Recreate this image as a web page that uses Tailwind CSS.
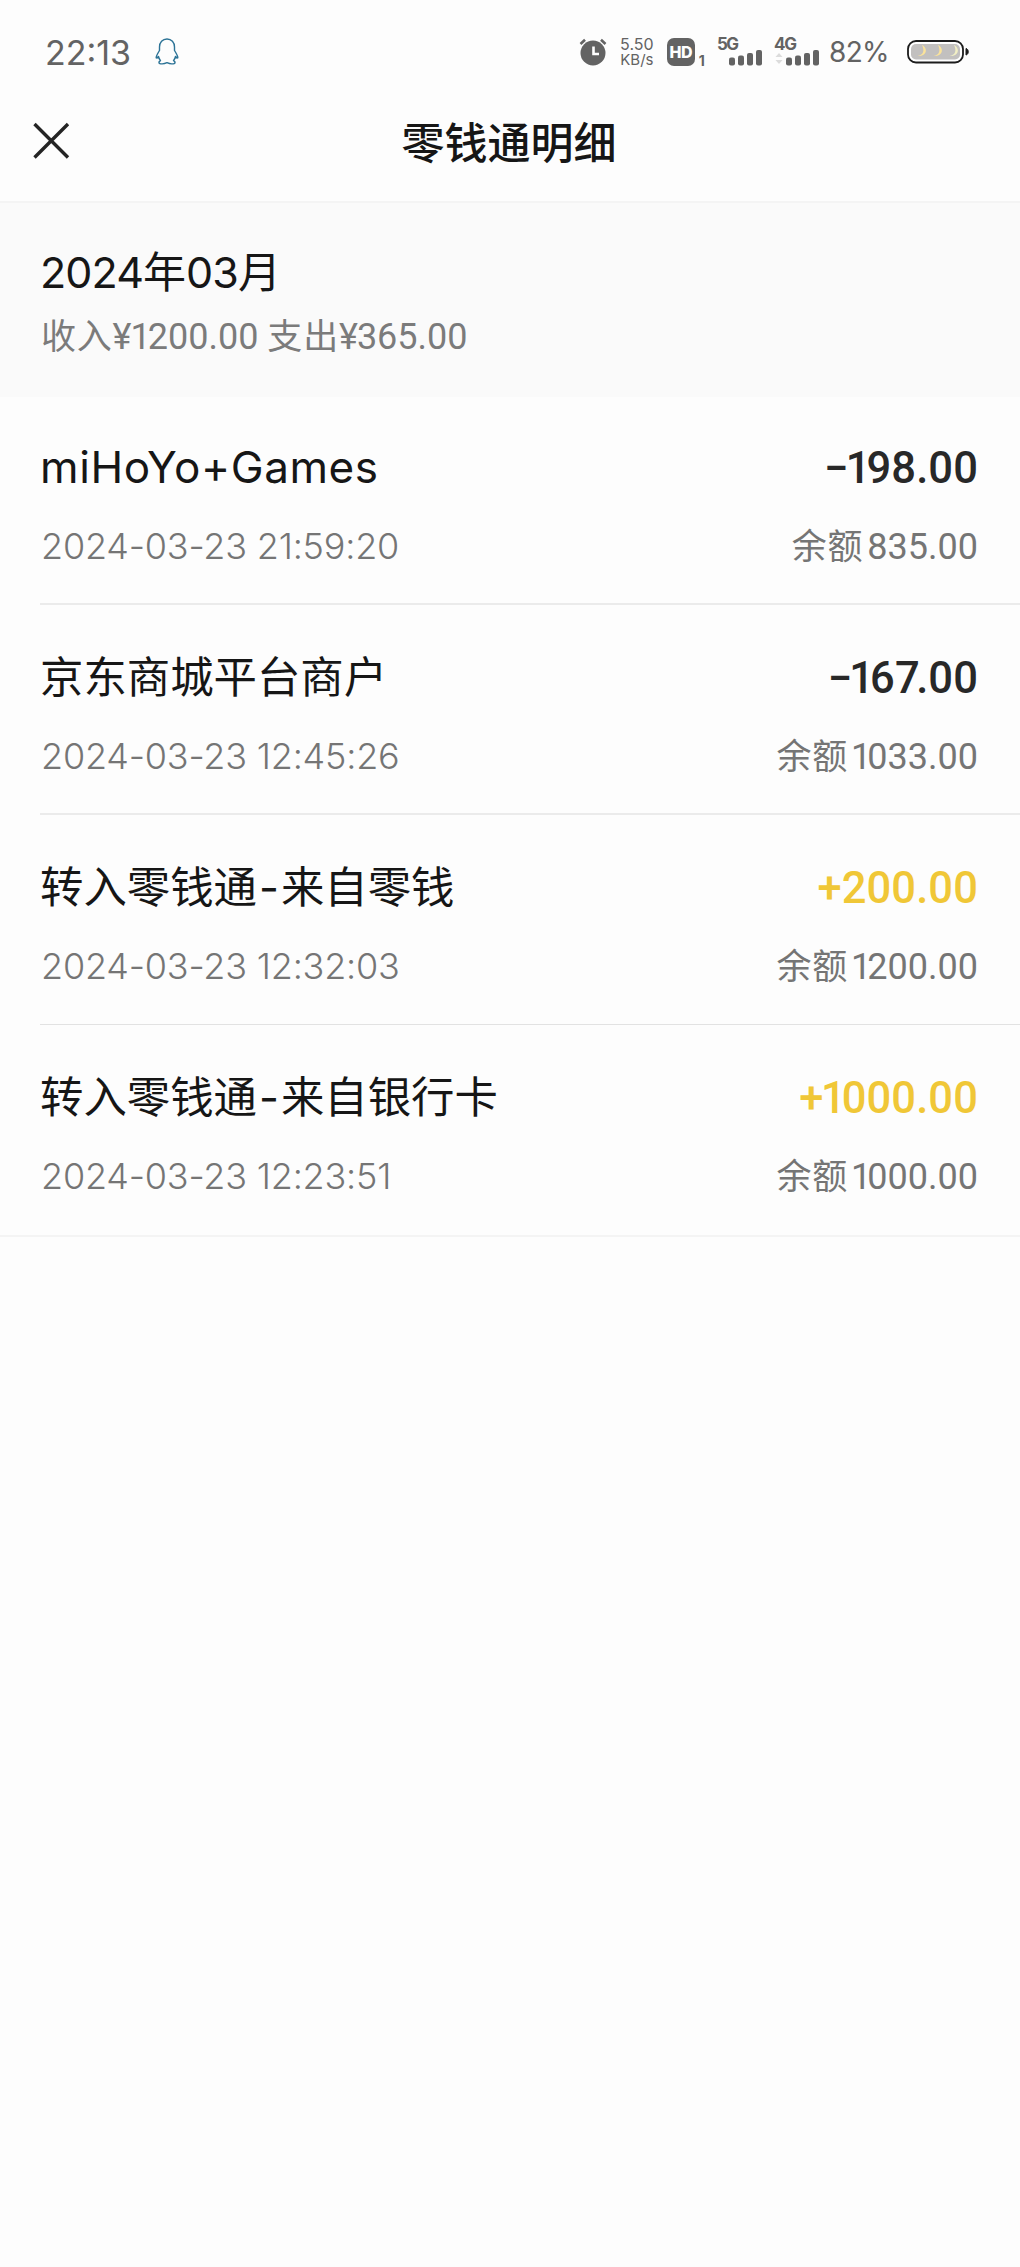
<!DOCTYPE html>
<html lang="zh-CN">
<head>
<meta charset="utf-8">
<title>零钱通明细</title>
<script src="https://cdn.jsdelivr.net/npm/@tailwindcss/browser@4"></script>
</head>
<body class="min-h-[2267px] bg-[#fdfdfd] font-['Inter','Noto_Sans_CJK_SC',sans-serif] font-normal text-[#161616]">
  <!-- status bar -->
  <div class="flex h-[104px] items-center justify-between pl-[45px] pr-[50px] text-[#636363]">
    <div class="flex items-center gap-[24px]">
      <span class="mt-[2px] text-[34px] leading-[40px] font-normal">22:13</span>
      <svg class="h-[28px] w-[24px]" viewBox="0 0 24 28" fill="none" stroke="#2c7396" stroke-width="1.4" stroke-linejoin="round"><path d="M12 1C7.500 1 4.500 4.500 4.500 9v3.500C3 15 1.200 17.500 1.200 19.500c.2 1 1.500.2 2.300-1 .4 2 1 3 2 4.200-1.500.8-1.800 1.600-1.300 2.600 2.300 1 5.300.6 7.800-.6 2.500 1.200 5.500 1.600 7.800.6.500-1 .2-1.800-1.300-2.600 1-1.200 1.600-2.200 2-4.200.8 1.200 2.100 2 2.300 1 0-2-1.800-4.500-3.300-7V9c0-4.500-3-8-7.500-8z"/></svg>
    </div>
    <div class="flex items-center">
      <svg class="h-[28px] w-[28px]" viewBox="0 0 28 28"><circle cx="14" cy="15" r="12.500" fill="#636363"/><path d="M1.500 6 6 1.800M26.500 6 22 1.800" stroke="#636363" stroke-width="2.600" fill="none"/><path d="M14.500 8.500v7.500h5.500" stroke="#fff" stroke-width="2.600" fill="none"/></svg>
      <div class="ml-[12px] flex w-[36px] flex-col items-center text-[16px] leading-[16px] font-normal"><span>5.50</span><span class="text-[15px]">KB/s</span></div>
      <div class="ml-[12px] flex h-[28px] w-[28px] items-center justify-center rounded-[7px] bg-[#636363] text-[16px] font-extrabold tracking-[-0.5px] text-white">HD</div>
      <span class="ml-[4px] mt-[17px] text-[14px] leading-[14px] font-bold">1</span>
      <svg class="ml-[12px] h-[38px] w-[46px]" viewBox="0 -4 46 38" fill="#636363"><text x="0" y="13" font-size="17" font-weight="700" textLength="22">5G</text><rect x="12" y="20.500" width="6" height="8" rx="2"/><rect x="21" y="18.500" width="6" height="10" rx="2"/><rect x="30" y="16" width="6" height="12.500" rx="2"/><rect x="39" y="13" width="6" height="15.500" rx="2"/></svg>
      <svg class="ml-[11px] h-[38px] w-[46px]" viewBox="0 -4 46 38" fill="#636363"><text x="0" y="13" font-size="17" font-weight="700" textLength="23">4G</text><path d="M1.500 20 5 16l3.500 4zM1.500 23h7L5 27z" fill="#dcdcdc"/><rect x="12" y="20.500" width="6" height="8" rx="2"/><rect x="21" y="18.500" width="6" height="10" rx="2"/><rect x="30" y="16" width="6" height="12.500" rx="2"/><rect x="39" y="13" width="6" height="15.500" rx="2"/></svg>
      <span class="ml-[9px] text-[28px] leading-[32px] tracking-[-0.600px]">82%</span>
      <svg class="ml-[18px] h-[24px] w-[63px]" viewBox="0 0 63 24"><rect x="1" y="1" width="55" height="21.500" rx="8" fill="#fff" stroke="#1c1c1c" stroke-width="1.800"/><rect x="4" y="4" width="49" height="15.500" rx="5" fill="#c2c0bf"/><path d="M59 8.500c3 .5 3 6 0 6.500z" fill="#1c1c1c" stroke="#1c1c1c"/><g fill="#fbe39a"><path d="M15 5c6 3 5.500 11.500-4.500 11 6.500-1 7-6 4.500-11z"/><path d="M31 5c6 3 5.500 11.500-4.500 11 6.500-1 7-6 4.500-11z"/><path d="M47 5c6 3 5.500 11.500-4.500 11 6.500-1 7-6 4.500-11z" fill="#f2efc4"/></g></svg>
    </div>
  </div>
  <header class="grid h-[97px] grid-cols-[1fr_auto_1fr] items-start pl-[32px] pr-[34px]">
    <svg class="mt-[18px] h-[38px] w-[38px]" viewBox="0 0 38 38" stroke="#242424" stroke-width="3.400"><path d="M2.500 2 36 35.500M36 2 2.500 35.500"/></svg>
    <h1 class="mt-[14px] text-[43px] leading-[50px] font-medium">零钱通明细</h1>
  </header>
  <!-- month summary -->
  <section class="h-[196px] border-t-2 border-[#f4f4f4] bg-[#fafafa] pl-[41px] pt-[44px]">
    <h2 class="-ml-px text-[43px] leading-[50px]"><span class="tracking-[-0.900px]">2024</span>年<span class="tracking-[-0.900px]">03</span>月</h2>
    <p class="mt-[19px] font-['Roboto','Noto_Sans_CJK_SC',sans-serif] text-[36px] leading-[42px] text-[#7b7b7b]"><span class="text-[35px] tracking-[0.800px]">收入</span><span class="tracking-[-1px]">¥</span><span class="tracking-[-3px]">1</span>200.00 <span class="text-[35px] tracking-[0.800px]">支出</span><span class="tracking-[-1px]">¥</span>365.00</p>
  </section>
  <!-- transactions -->
  <main class="border-b-2 border-[#f4f4f4]">
    <article class="ml-[40px] flex h-[208px] flex-col justify-end gap-[31px] border-b-2 border-[#ebebeb] pb-[34px] pr-[42px]">
      <div class="flex items-baseline justify-between"><span class="text-[44px] leading-[50px] tracking-[0.600px]">miHoYo+Games</span><span class="font-['Roboto'] text-[43.500px] leading-[50px] font-medium tracking-[0.100px] text-[#282828]"><span class="tracking-[-3px]">−</span><span class="tracking-[-4px]">1</span>98.00</span></div>
      <div class="flex items-baseline justify-between text-[#757575]"><span class="ml-px text-[36px] leading-[42px] font-light tracking-[-0.200px]">2024-03-23 21:59:20</span><span class="flex items-baseline gap-[4px] font-['Roboto','Noto_Sans_CJK_SC',sans-serif] text-[36px] leading-[42px]"><span class="text-[35px] tracking-[0.800px]">余额</span><span>835.00</span></span></div>
    </article>
    <article class="ml-[40px] flex h-[210px] flex-col justify-end gap-[31px] border-b-2 border-[#ebebeb] pb-[34px] pr-[42px]">
      <div class="flex items-baseline justify-between"><span class="text-[43.400px] leading-[50px]">京东商城平台商户</span><span class="font-['Roboto'] text-[43.500px] leading-[50px] font-medium tracking-[0.100px] text-[#282828]"><span class="tracking-[-3px]">−</span><span class="tracking-[-4px]">1</span>6<span class="tracking-[-3.500px]">7</span>.00</span></div>
      <div class="flex items-baseline justify-between text-[#757575]"><span class="ml-px text-[36px] leading-[42px] font-light tracking-[-0.200px]">2024-03-23 12:45:26</span><span class="flex items-baseline gap-[3px] font-['Roboto','Noto_Sans_CJK_SC',sans-serif] text-[36px] leading-[42px]"><span class="text-[35px] tracking-[0.800px]">余额</span><span><span class="tracking-[-4px]">1</span>033.00</span></span></div>
    </article>
    <article class="ml-[40px] flex h-[210px] flex-col justify-end gap-[31px] border-b border-[#e2e2e2] pb-[35px] pr-[42px]">
      <div class="flex items-baseline justify-between"><span class="text-[43.400px] leading-[50px]">转入零钱通<span class="mx-[2px]">-</span>来自零钱</span><span class="font-['Roboto'] text-[43.500px] leading-[50px] font-medium tracking-[0.100px] text-[#f0c737]">+200.00</span></div>
      <div class="flex items-baseline justify-between text-[#757575]"><span class="ml-px text-[36px] leading-[42px] font-light tracking-[-0.200px]">2024-03-23 12:32:03</span><span class="flex items-baseline gap-[3px] font-['Roboto','Noto_Sans_CJK_SC',sans-serif] text-[36px] leading-[42px]"><span class="text-[35px] tracking-[0.800px]">余额</span><span><span class="tracking-[-4px]">1</span>200.00</span></span></div>
    </article>
    <article class="ml-[40px] flex h-[210px] flex-col justify-end gap-[31px] pb-[36px] pr-[42px]">
      <div class="flex items-baseline justify-between"><span class="text-[43.400px] leading-[50px]">转入零钱通<span class="mx-[2px]">-</span>来自银行卡</span><span class="font-['Roboto'] text-[43.500px] leading-[50px] font-medium tracking-[0.100px] text-[#f0c737]"><span class="tracking-[-2.500px]">+</span><span class="tracking-[-4px]">1</span>000.00</span></div>
      <div class="flex items-baseline justify-between text-[#757575]"><span class="ml-px text-[36px] leading-[42px] font-light tracking-[-0.200px]">2024-03-23 12:23:51</span><span class="flex items-baseline gap-[3px] font-['Roboto','Noto_Sans_CJK_SC',sans-serif] text-[36px] leading-[42px]"><span class="text-[35px] tracking-[0.800px]">余额</span><span><span class="tracking-[-4px]">1</span>000.00</span></span></div>
    </article>
  </main>
</body>
</html>
